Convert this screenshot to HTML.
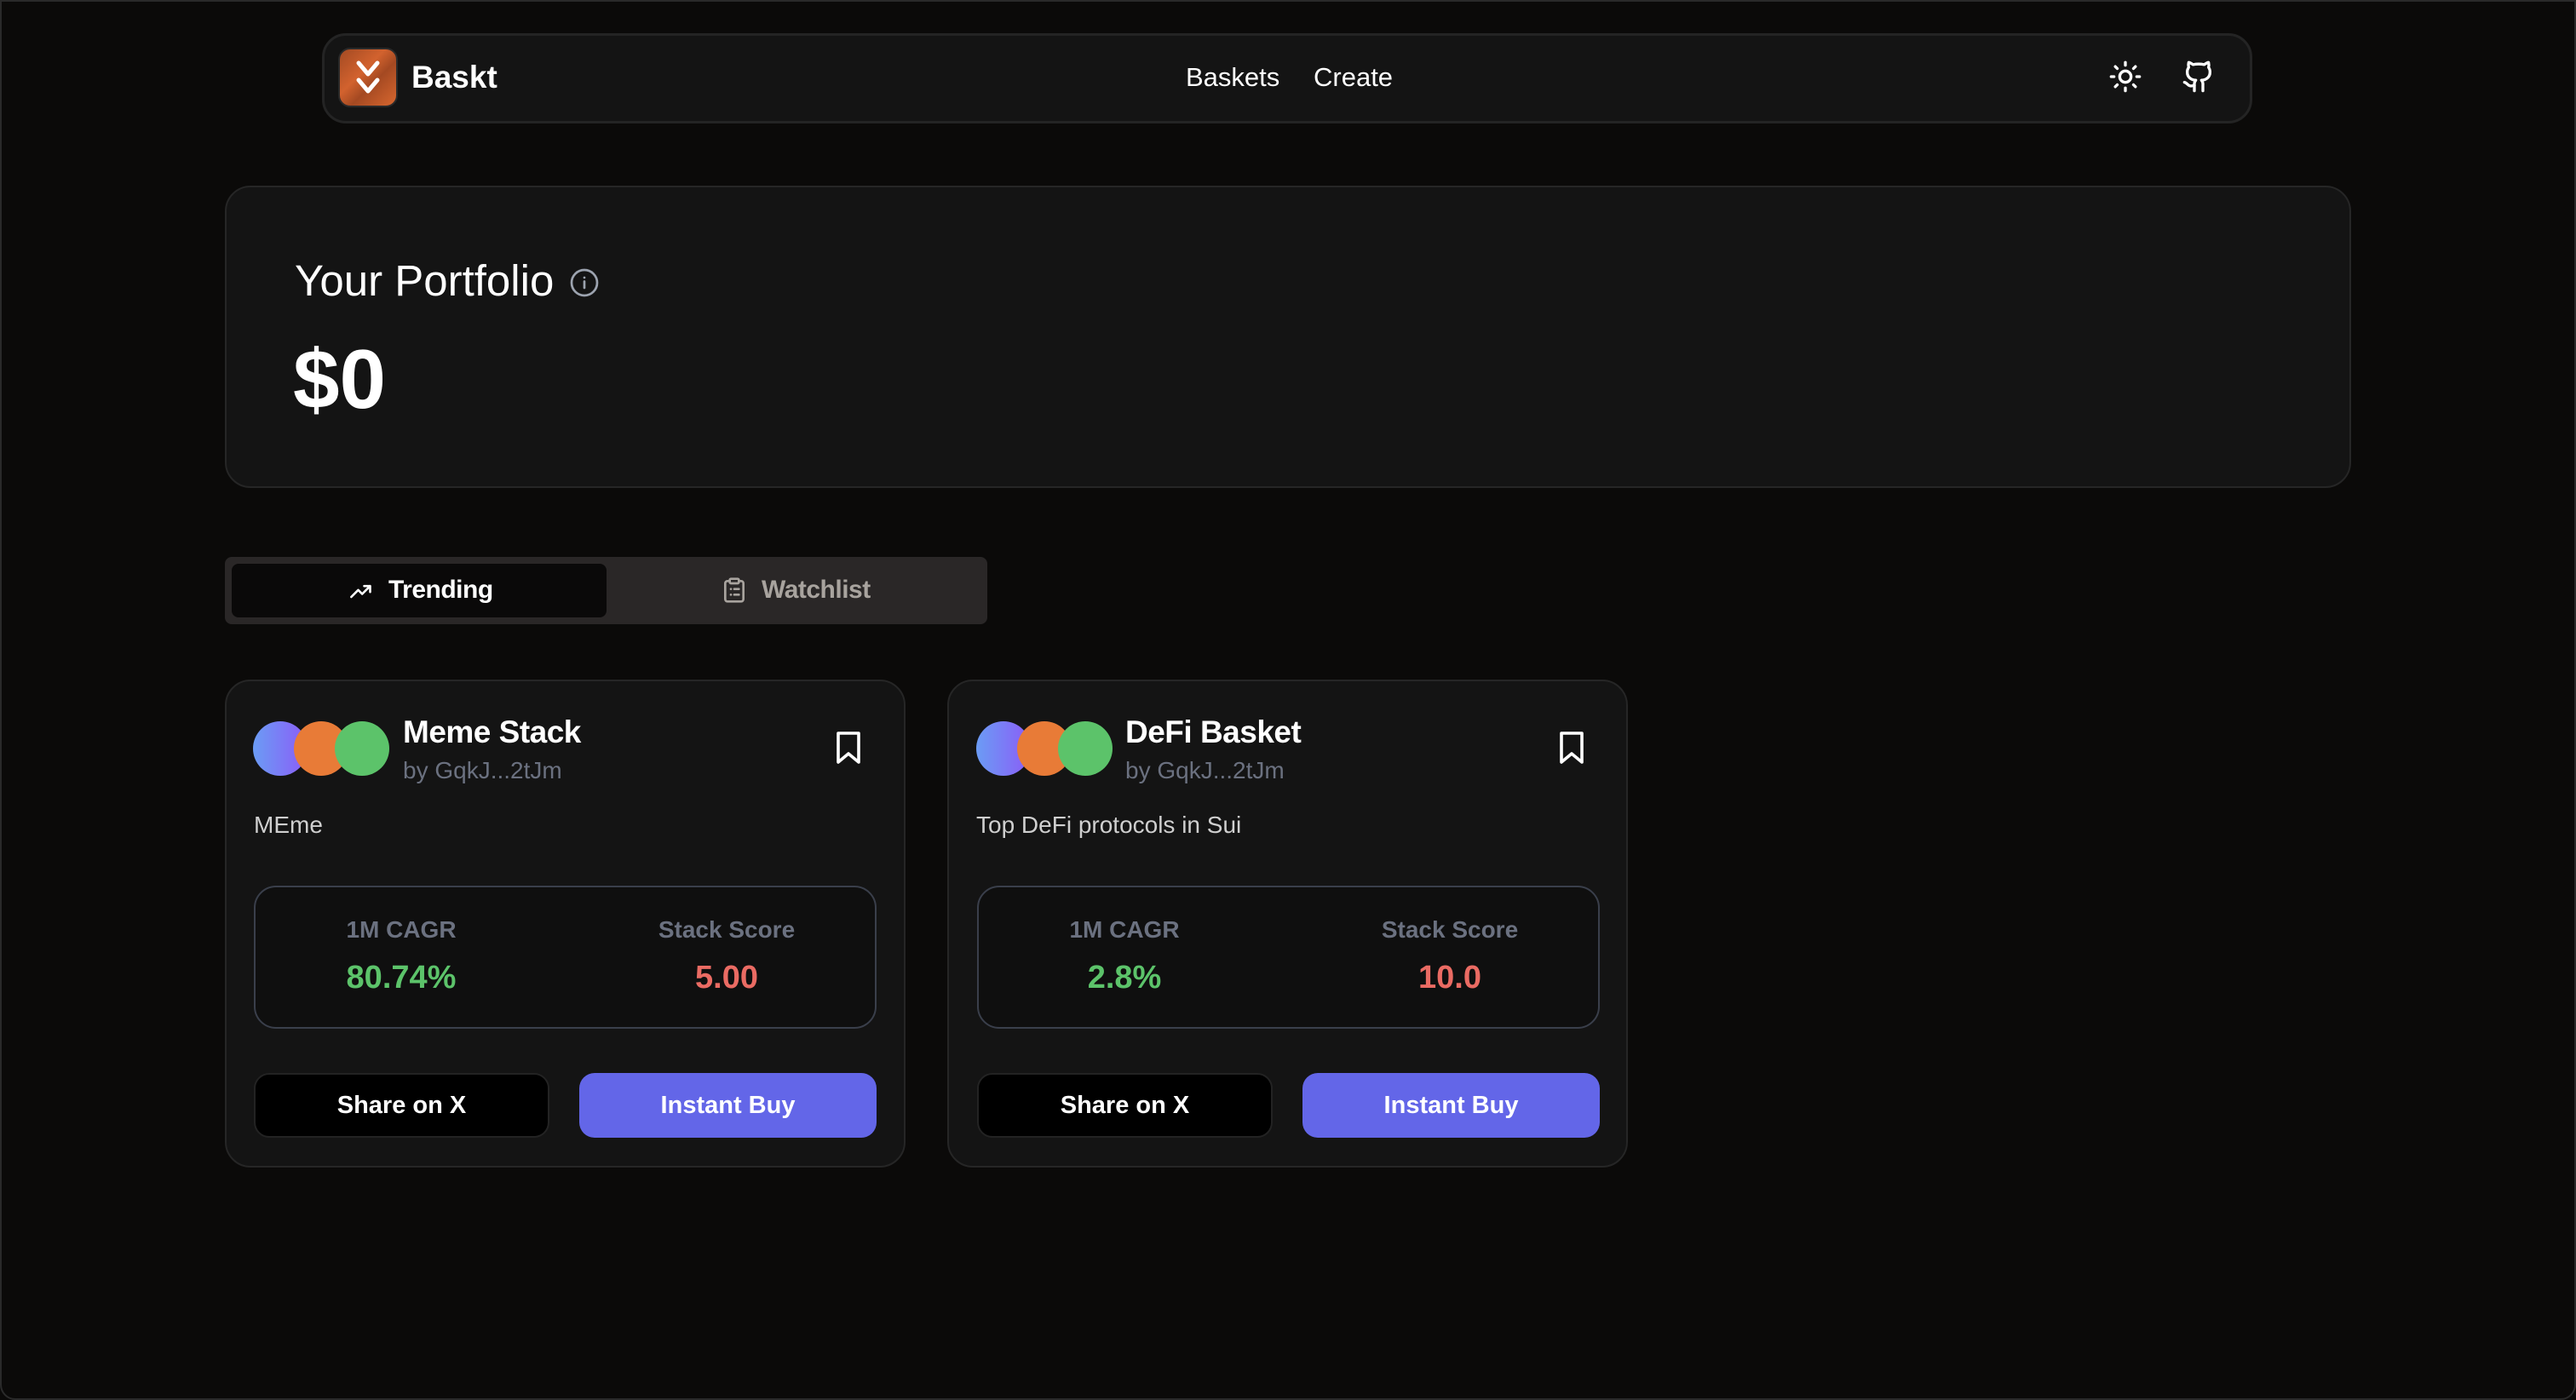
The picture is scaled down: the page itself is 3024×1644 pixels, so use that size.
<!DOCTYPE html>
<html><head><meta charset="utf-8"><style>
*{margin:0;padding:0;box-sizing:border-box}
html,body{width:3024px;height:1644px;overflow:hidden}
body{background:#0b0a09;font-family:"Liberation Sans",sans-serif;color:#fff;position:relative}
.frame{position:absolute;left:0;top:0;width:3024px;height:1644px;border:2px solid #2a2a2a;border-radius:0 0 18px 18px}
.a{position:absolute}
.nav{left:378px;top:39px;width:2266px;height:106px;background:#141414;border:3px solid #242424;border-radius:28px}
.logo{left:397px;top:56px;width:70px;height:70px;border-radius:14px;background:linear-gradient(135deg,#a34a23,#d2622e 40%,#a44922 60%,#d8672f);border:2px solid #2a2a2a}
.t{white-space:nowrap;line-height:1}
.card{background:#141414;border:2px solid #262626;border-radius:30px}
.circ{width:64px;height:64px;border-radius:50%}
.stats{border:2px solid #3a3f4b;border-radius:26px;background:#0f0f0f}
.btn{border-radius:18px;display:flex;align-items:center;justify-content:center;font-size:29px;font-weight:bold}
</style></head><body>
<div class="frame"></div>
<div class="a nav"></div>
<div class="a logo"><svg width="66" height="66" viewBox="0 0 66 66"><path d="M22 16l11 13 11-13M22 36l11 13 11-13" fill="none" stroke="#fff" stroke-width="5" stroke-linecap="round" stroke-linejoin="round"/></svg></div>
<div class="a t" style="left:483px;top:72px;font-size:37px;font-weight:bold">Baskt</div>
<div class="a t" style="left:1392px;top:75px;font-size:31px">Baskets</div>
<div class="a t" style="left:1542px;top:75px;font-size:31px">Create</div>
<svg class="a" style="left:2475px;top:70px" width="40" height="40" viewBox="0 0 24 24" fill="none" stroke="#fff" stroke-width="2" stroke-linecap="round"><circle cx="12" cy="12" r="4"/><path d="M12 2v2M12 20v2M4.9 4.9l1.4 1.4M17.7 17.7l1.4 1.4M2 12h2M20 12h2M6.3 17.7l-1.4 1.4M19.1 4.9l-1.4 1.4"/></svg>
<svg class="a" style="left:2561px;top:70px" width="40" height="40" viewBox="0 0 24 24" fill="none" stroke="#fff" stroke-width="2" stroke-linecap="round" stroke-linejoin="round"><path d="M15 22v-4a4.8 4.8 0 0 0-1-3.5c3 0 6-2 6-5.5.08-1.25-.27-2.48-1-3.5.28-1.15.28-2.35 0-3.5 0 0-1 0-3 1.5-2.64-.5-5.36-.5-8 0C6 2 5 2 5 2c-.3 1.15-.3 2.35 0 3.5A5.4 5.4 0 0 0 4 9c0 3.5 3 5.5 6 5.5-.39.49-.68 1.05-.85 1.650-.17.6-.22 1.23-.15 1.85v4"/><path d="M9 18c-4.51 2-5-2-7-2"/></svg>

<div class="a card" style="left:264px;top:218px;width:2496px;height:355px"></div>
<div class="a t" style="left:346px;top:304px;font-size:51px">Your Portfolio</div>
<svg class="a" style="left:668px;top:314px" width="36" height="36" viewBox="0 0 24 24" fill="none" stroke="#9ca3af" stroke-width="1.8" stroke-linecap="round"><circle cx="12" cy="12" r="10"/><path d="M12 16v-5M12 8h.01"/></svg>
<div class="a t" style="left:344px;top:396px;font-size:98px;font-weight:bold">$0</div>

<div class="a" style="left:264px;top:654px;width:895px;height:79px;background:#2a2727;border-radius:8px"></div>
<div class="a" style="left:272px;top:662px;width:440px;height:63px;background:#0a0909;border-radius:8px"></div>
<svg class="a" style="left:408px;top:680px" width="32" height="28" viewBox="0 0 24 24" fill="none" stroke="#fff" stroke-width="2.2" stroke-linecap="round" stroke-linejoin="round"><path d="M2 18l7-7 4 4 8-8M15 7h6v6"/></svg>
<div class="a t" style="left:456px;top:678px;font-size:30px;font-weight:bold;letter-spacing:-0.5px">Trending</div>
<svg class="a" style="left:846px;top:676px" width="32" height="34" viewBox="0 0 24 24" fill="none" stroke="#a8a39e" stroke-width="2" stroke-linecap="round"><rect x="8" y="2" width="8" height="4" rx="1"/><path d="M16 4h2a2 2 0 0 1 2 2v14a2 2 0 0 1-2 2H6a2 2 0 0 1-2-2V6a2 2 0 0 1 2-2h2M9 11h.01M12 11h4M9 16h.01M12 16h4"/></svg>
<div class="a t" style="left:894px;top:678px;font-size:30px;font-weight:bold;color:#a8a39e;letter-spacing:-0.5px">Watchlist</div>

<!-- card 1 -->
<div class="a card" style="left:264px;top:798px;width:799px;height:573px"></div>
<div class="a circ" style="left:297px;top:847px;background:linear-gradient(90deg,#6b9cf5,#8b5cf6)"></div>
<div class="a circ" style="left:345px;top:847px;background:#e87b37"></div>
<div class="a circ" style="left:393px;top:847px;background:#5cc36a"></div>
<div class="a t" style="left:473px;top:841px;font-size:37px;font-weight:bold;letter-spacing:-0.5px">Meme Stack</div>
<div class="a t" style="left:473px;top:891px;font-size:28px;color:#6b7180">by GqkJ...2tJm</div>
<svg class="a" style="left:980px;top:858px" width="32" height="40" viewBox="0 0 16 20" fill="none" stroke="#fff" stroke-width="1.8" stroke-linejoin="round"><path d="M2 1.5h12v17l-6-5-6 5z"/></svg>
<div class="a t" style="left:298px;top:955px;font-size:28px;color:#cfcfcf">MEme</div>
<div class="a stats" style="left:298px;top:1040px;width:731px;height:168px"></div>
<div class="a t" style="left:298px;top:1078px;width:346px;text-align:center;font-size:28px;font-weight:bold;color:#6b7180">1M CAGR</div>
<div class="a t" style="left:298px;top:1129px;width:346px;text-align:center;font-size:38px;font-weight:bold;color:#5cc36a">80.74%</div>
<div class="a t" style="left:680px;top:1078px;width:346px;text-align:center;font-size:28px;font-weight:bold;color:#6b7180">Stack Score</div>
<div class="a t" style="left:680px;top:1129px;width:346px;text-align:center;font-size:38px;font-weight:bold;color:#ea6b63">5.00</div>
<div class="a btn" style="left:298px;top:1260px;width:347px;height:76px;background:#000;border:2px solid #232323">Share on X</div>
<div class="a btn" style="left:680px;top:1260px;width:349px;height:76px;background:#6366e8">Instant Buy</div>

<!-- card 2 -->
<div class="a card" style="left:1112px;top:798px;width:799px;height:573px"></div>
<div class="a circ" style="left:1146px;top:847px;background:linear-gradient(90deg,#6b9cf5,#8b5cf6)"></div>
<div class="a circ" style="left:1194px;top:847px;background:#e87b37"></div>
<div class="a circ" style="left:1242px;top:847px;background:#5cc36a"></div>
<div class="a t" style="left:1321px;top:841px;font-size:37px;font-weight:bold;letter-spacing:-0.5px">DeFi Basket</div>
<div class="a t" style="left:1321px;top:891px;font-size:28px;color:#6b7180">by GqkJ...2tJm</div>
<svg class="a" style="left:1829px;top:858px" width="32" height="40" viewBox="0 0 16 20" fill="none" stroke="#fff" stroke-width="1.8" stroke-linejoin="round"><path d="M2 1.5h12v17l-6-5-6 5z"/></svg>
<div class="a t" style="left:1146px;top:955px;font-size:28px;color:#cfcfcf">Top DeFi protocols in Sui</div>
<div class="a stats" style="left:1147px;top:1040px;width:731px;height:168px"></div>
<div class="a t" style="left:1147px;top:1078px;width:346px;text-align:center;font-size:28px;font-weight:bold;color:#6b7180">1M CAGR</div>
<div class="a t" style="left:1147px;top:1129px;width:346px;text-align:center;font-size:38px;font-weight:bold;color:#5cc36a">2.8%</div>
<div class="a t" style="left:1529px;top:1078px;width:346px;text-align:center;font-size:28px;font-weight:bold;color:#6b7180">Stack Score</div>
<div class="a t" style="left:1529px;top:1129px;width:346px;text-align:center;font-size:38px;font-weight:bold;color:#ea6b63">10.0</div>
<div class="a btn" style="left:1147px;top:1260px;width:347px;height:76px;background:#000;border:2px solid #232323">Share on X</div>
<div class="a btn" style="left:1529px;top:1260px;width:349px;height:76px;background:#6366e8">Instant Buy</div>
</body></html>
